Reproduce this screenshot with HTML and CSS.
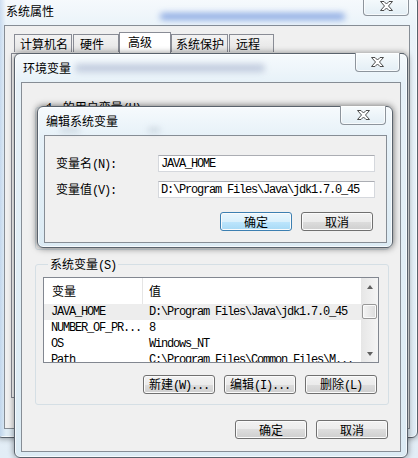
FILE: index.html
```html
<!DOCTYPE html>
<html>
<head>
    <title>环境变量</title>
    <link rel="stylesheet" href="styles.css">
</head>
<body>

    <!-- 系统属性 -->
    <div class="win outer">
        <div class="titlebar">
            <span class="title">系统属性</span>
            <span class="haze haze-outer"></span>
        </div>
        <div class="close close-outer">
            <svg width="13" height="10" viewBox="0 0 13 10"><polygon points="0.5,0.5 4,0.5 6.5,3 9,0.5 12.5,0.5 8.5,5 12.5,9.5 9,9.5 6.5,7 4,9.5 0.5,9.5 4.5,5" fill="#fff" stroke="#4c4c4c"/></svg>
        </div>
        <div class="client">
            <div class="tabs">
                <div class="tab tab-1">计算机名</div>
                <div class="tab tab-2">硬件</div>
                <div class="tab tab-3 active">高级</div>
                <div class="tab tab-4">系统保护</div>
                <div class="tab tab-5">远程</div>
            </div>
            <div class="tab-panel"></div>
        </div>
    </div>

    <!-- 环境变量 -->
    <div class="win env">
        <div class="titlebar">
            <span class="title">环境变量</span>
            <span class="haze haze-env"></span>
        </div>
        <div class="close close-env">
            <svg width="13" height="10" viewBox="0 0 13 10"><polygon points="0.5,0.5 4,0.5 6.5,3 9,0.5 12.5,0.5 8.5,5 12.5,9.5 9,9.5 6.5,7 4,9.5 0.5,9.5 4.5,5" fill="#fff" stroke="#4c4c4c"/></svg>
        </div>
        <div class="client env-client">
            <div class="group user-group">
                <div class="group-label"><span class="en">1</span>&nbsp;&nbsp;&nbsp;&nbsp;的用户变量<span class="en">(U)</span></div>
            </div>

            <div class="group sys-group">
                <div class="group-label">系统变量<span class="en">(S)</span></div>
                <div class="list">
                    <div class="list-main">
                        <div class="list-head">
                            <div class="col-name">变量</div>
                            <div class="col-val">值</div>
                        </div>
                        <div class="list-row selected">
                            <div class="col-name en">JAVA_HOME</div>
                            <div class="col-val en">D:\Program Files\Java\jdk1.7.0_45</div>
                        </div>
                        <div class="list-row">
                            <div class="col-name en">NUMBER_OF_PR...</div>
                            <div class="col-val en">8</div>
                        </div>
                        <div class="list-row">
                            <div class="col-name en">OS</div>
                            <div class="col-val en">Windows_NT</div>
                        </div>
                        <div class="list-row">
                            <div class="col-name en">Path</div>
                            <div class="col-val en">C:\Program Files\Common Files\M...</div>
                        </div>
                    </div>
                    <div class="vscroll">
                        <div class="arrow"><span class="tri-up"></span></div>
                        <div class="track"><div class="thumb"></div></div>
                        <div class="arrow"><span class="tri-down"></span></div>
                    </div>
                </div>
                <div class="btn-row group-btns">
                    <button class="btn">新建<span class="en">(W)...</span></button>
                    <button class="btn">编辑<span class="en">(I)...</span></button>
                    <button class="btn">删除<span class="en">(L)</span></button>
                </div>
            </div>

            <div class="btn-row env-btns">
                <button class="btn">确定</button>
                <button class="btn">取消</button>
            </div>
        </div>
    </div>

    <!-- 编辑系统变量 -->
    <div class="win edit">
        <div class="titlebar">
            <span class="title">编辑系统变量</span>
            <span class="haze haze-edit1"></span>
            <span class="haze haze-edit2"></span>
        </div>
        <div class="close close-edit">
            <svg width="13" height="10" viewBox="0 0 13 10"><polygon points="0.5,0.5 4,0.5 6.5,3 9,0.5 12.5,0.5 8.5,5 12.5,9.5 9,9.5 6.5,7 4,9.5 0.5,9.5 4.5,5" fill="#fff" stroke="#4c4c4c"/></svg>
        </div>
        <div class="client edit-client">
            <div class="form-grid">
                <label for="varName">变量名<span class="en">(N):</span></label>
                <input class="field en" type="text" id="varName" value="JAVA_HOME">
                <label for="varValue">变量值<span class="en">(V):</span></label>
                <input class="field en" type="text" id="varValue" value="D:\Program Files\Java\jdk1.7.0_45">
            </div>
            <div class="btn-row edit-btns">
                <button class="btn default">确定</button>
                <button class="btn">取消</button>
            </div>
        </div>
    </div>

</body>
</html>
```

FILE: styles.css
```css
body {
    margin: 0;
    width: 418px;
    height: 458px;
    overflow: hidden;
    position: relative;
    font-family: "Noto Sans CJK SC", "Noto Sans", sans-serif;
    font-size: 12px;
    line-height: 14px;
    color: #000;
    background: linear-gradient(180deg, #f2f7fb, #e2edf6);
}

.en {
    font-family: "Liberation Mono", monospace;
    font-size: 12px;
    letter-spacing: -1.2px;
}

/* window frames */

.win {
    position: absolute;
    box-sizing: border-box;
    display: flex;
    flex-direction: column;
    border: 1px solid #59626c;
    border-radius: 6px;
    background: linear-gradient(180deg, #f6fafd 0px, #e6f1f8 30px, #dcebf4 100%);
    box-shadow: inset 0 0 0 1px rgba(255, 255, 255, 0.7), 0 0 6px rgba(0, 0, 0, 0.45);
}

.titlebar {
    position: relative;
    height: 28px;
    flex: none;
    display: flex;
    align-items: center;
    padding-left: 2px;
}

.title {
    position: relative;
    z-index: 1;
}

.haze {
    position: absolute;
    filter: blur(3px);
    border-radius: 4px;
}

.haze-outer {
    left: 156px;
    top: 16px;
    width: 185px;
    height: 7px;
    background: rgba(60, 110, 210, 0.55);
}

.haze-env {
    left: 54px;
    top: 10px;
    width: 190px;
    height: 8px;
    background: rgba(110, 125, 170, 0.35);
}

.haze-edit1 {
    left: 16px;
    top: 21px;
    width: 20px;
    height: 4px;
    background: rgba(110, 125, 150, 0.3);
}

.haze-edit2 {
    left: 104px;
    top: 21px;
    width: 12px;
    height: 4px;
    background: rgba(110, 125, 150, 0.3);
}

.close {
    position: absolute;
    box-sizing: border-box;
    height: 19px;
    display: flex;
    align-items: center;
    justify-content: center;
    border: 1px solid #8d949c;
    border-top: none;
    border-radius: 0 0 4px 4px;
    background: linear-gradient(180deg, #f7fbfd, #e3eef5);
    box-shadow: inset 0 0 0 1px rgba(255, 255, 255, 0.7);
}

.client {
    flex: 1;
    box-sizing: border-box;
    border: 1px solid #868d95;
    background: #f0f0f0;
}

/* 系统属性 */

.outer {
    left: -4px;
    top: -4px;
    width: 422px;
    height: 442px;
    padding: 0 7px 8px 7px;
    background: linear-gradient(90deg, rgba(140, 175, 220, 0.55), rgba(140, 175, 220, 0) 9px),
                linear-gradient(180deg, #f7fafd 0px, #eaf3f9 30px, #dfecf5 100%);
}

.close-outer {
    top: 0;
    right: 8px;
    width: 46px;
}

.tabs {
    display: flex;
    align-items: flex-end;
    padding: 6px 0 0 9px;
    height: 21px;
}

.tab {
    box-sizing: border-box;
    height: 18px;
    margin-bottom: 1px;
    padding-left: 5px;
    border: 1px solid #898c95;
    border-bottom: none;
    background: linear-gradient(180deg, #f3f3f3, #e4e4e4);
    line-height: 17px;
    white-space: nowrap;
}

.tab + .tab {
    margin-left: 1px;
}

.tab-1 { width: 58px; }
.tab-2 { width: 46px; padding-left: 6px; }
.tab-3 { width: 52px; }
.tab-4 { width: 57px; padding-left: 4px; }
.tab-5 { width: 45px; padding-left: 6px; }

.tab.active {
    height: 21px;
    margin-bottom: 0;
    margin-left: 0;
    padding-left: 8px;
    background: #fff;
    line-height: 17px;
}

.tab.active + .tab {
    margin-left: 0;
}

.tab-panel {
    height: 343px;
    margin: 0 5px 0 6px;
    border: 1px solid #898c95;
    background: #fcfcfc;
}

/* 环境变量 */

.env {
    left: 14px;
    top: 53px;
    width: 394px;
    height: 405px;
    padding: 0 6px 5px 6px;
    z-index: 2;
}

.close-env {
    top: -1px;
    right: 7px;
    width: 45px;
}

.env-client {
    padding: 24px 11px 0 13px;
}

.group {
    border: 1px solid #d5dfe5;
    border-radius: 3px;
}

.group-label {
    width: fit-content;
    height: 14px;
    margin: -8px 0 0 5px;
    padding: 0 2px;
    background: #f0f0f0;
    white-space: nowrap;
}

.user-group {
    height: 143px;
    box-sizing: border-box;
    margin-bottom: 14px;
}

.user-group .group-label {
    margin-left: 8px;
}

.sys-group {
    padding: 0 9px 10px 7px;
}

.list {
    display: flex;
    height: 86px;
    box-sizing: border-box;
    margin-top: 6px;
    border: 1px solid #828790;
    background: #fff;
    overflow: hidden;
}

.list-main {
    flex: 1;
    min-width: 0;
}

.list-head,
.list-row {
    display: flex;
    align-items: center;
    white-space: nowrap;
}

.list-head {
    height: 26px;
    line-height: 26px;
}

.list-row {
    height: 16px;
    line-height: 16px;
    flex: none;
}

.list-row.selected {
    background: #ededed;
}

.col-name {
    width: 99px;
    flex: none;
    box-sizing: border-box;
    padding-left: 7px;
    overflow: hidden;
}

.col-val {
    flex: 1;
    padding-left: 6px;
    overflow: hidden;
}

.list-head .col-name {
    padding-left: 8px;
    border-right: 1px solid #e5e5e5;
    height: 26px;
}

.list-head .col-val {
    padding-left: 6px;
}

.vscroll {
    width: 17px;
    flex: none;
    display: flex;
    flex-direction: column;
    background: linear-gradient(90deg, #e6e6e6, #f5f5f5);
}

.arrow {
    height: 17px;
    display: flex;
    align-items: center;
    justify-content: center;
}

.tri-up {
    border-left: 3px solid transparent;
    border-right: 3px solid transparent;
    border-bottom: 4px solid #606060;
}

.tri-down {
    border-left: 3px solid transparent;
    border-right: 3px solid transparent;
    border-top: 4px solid #606060;
}

.track {
    flex: 1;
}

.thumb {
    height: 15px;
    margin: 9px 1px 0 1px;
    box-sizing: border-box;
    border: 1px solid #979797;
    border-radius: 2px;
    background: linear-gradient(90deg, #f4f4f4, #dcdcdc);
    box-shadow: inset 0 0 0 1px #fafafa;
}

/* buttons */

.btn-row {
    display: flex;
    justify-content: flex-end;
    gap: 9px;
}

.btn {
    width: 72px;
    height: 19px;
    padding: 0;
    box-sizing: border-box;
    border: 1px solid #707070;
    border-radius: 3px;
    background: linear-gradient(180deg, #f2f2f2 0%, #ebebeb 50%, #dddddd 50%, #cfcfcf 100%);
    box-shadow: inset 0 0 0 1px #fbfbfb;
    font: inherit;
    line-height: 16px;
    color: #000;
    white-space: nowrap;
}

.btn.default {
    border-color: #3c7fb1;
    background: linear-gradient(180deg, #eaf6fd 0%, #d9f0fc 50%, #bee6fd 50%, #a7d9f5 100%);
}

.group-btns {
    margin-top: 12px;
    padding-right: 2px;
}

.env-btns {
    margin-top: 15px;
    padding-right: 1px;
}

/* 编辑系统变量 */

.edit {
    left: 37px;
    top: 106px;
    width: 356px;
    height: 142px;
    padding: 0 5px 4px 6px;
    z-index: 3;
    box-shadow: inset 0 0 0 1px rgba(255, 255, 255, 0.7), 0 0 7px rgba(0, 0, 0, 0.6);
}

.close-edit {
    top: -1px;
    right: 6px;
    width: 46px;
}

.edit-client {
    padding: 19px 11px 0 11px;
}

.form-grid {
    display: grid;
    grid-template-columns: 102px 217px;
    grid-auto-rows: 17px;
    row-gap: 9px;
    align-items: center;
}

.field {
    height: 17px;
    box-sizing: border-box;
    margin: 0;
    padding: 0 2px;
    border: 1px solid #d5d8dd;
    border-top-color: #abadb3;
    background: #fff;
    color: #000;
    outline: none;
}

.edit-btns {
    margin-top: 14px;
    padding-right: 2px;
}
```
